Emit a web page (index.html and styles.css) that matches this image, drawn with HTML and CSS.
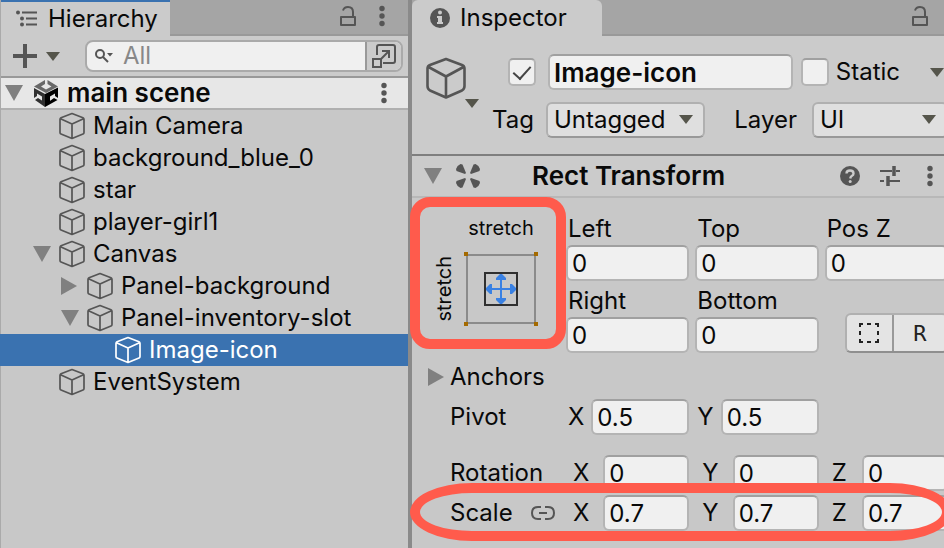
FILE: index.html
```html
<!DOCTYPE html>
<html lang="en">
<head>
<meta charset="utf-8">
<title>Editor</title>
<link rel="stylesheet" href="styles.css">
</head>
<body>
<svg class="defs" aria-hidden="true">
  <symbol id="cube" viewBox="0 0 28 28"><path d="M14 1.5 25 5.8Q26 6.3 26 7.5V20.5Q26 21.6 25 22L14 26.5 3 22Q2 21.6 2 20.5V7.5Q2 6.3 3 5.8ZM2.5 6.8 14 12 25.500 6.800M14 12V26.500" fill="none" stroke="currentColor" stroke-width="1.7" stroke-linejoin="round"/></symbol>
  <symbol id="down" viewBox="0 0 18 16"><path d="M0 0H18L9 16Z" fill="currentColor"/></symbol>
  <symbol id="right" viewBox="0 0 16 18"><path d="M0 0V18L16 9Z" fill="currentColor"/></symbol>
  <symbol id="caret" viewBox="0 0 14 9"><path d="M0 0H14L7 9Z" fill="currentColor"/></symbol>
  <symbol id="dots" viewBox="0 0 6 22"><circle cx="3" cy="3.500" r="2.700" fill="currentColor"/><circle cx="3" cy="11" r="2.700" fill="currentColor"/><circle cx="3" cy="18.500" r="2.700" fill="currentColor"/></symbol>
  <symbol id="lock" viewBox="0 0 16 20"><path d="M1 11H15V19H1ZM3 4.500Q4 1 8 1Q13 1 13 6V11" fill="none" stroke="currentColor" stroke-width="2" stroke-linejoin="round"/></symbol>
</svg>
<div class="editor">
  <section class="hierarchy">
    <header class="tabbar">
      <h2 class="tab">
        <svg class="icon-list" viewBox="0 0 22 18"><g fill="currentColor"><circle cx="2" cy="2.500" r="2"/><rect x="6" y="1.500" width="15" height="2"/><circle cx="6" cy="8.500" r="2"/><rect x="10" y="7.500" width="11" height="2"/><circle cx="6" cy="14.500" r="2"/><rect x="10" y="13.500" width="11" height="2"/></g></svg>
        Hierarchy
      </h2>
      <div class="tab-tools">
        <button aria-label="Lock"><svg class="icon-lock"><use href="#lock"/></svg></button>
        <button aria-label="Menu"><svg class="icon-dots"><use href="#dots"/></svg></button>
      </div>
    </header>
    <div class="toolbar">
      <button class="create" aria-label="Create">
        <svg class="icon-plus" viewBox="0 0 24 24"><path d="M0 12H24M12 0V24" stroke="currentColor" stroke-width="4"/></svg>
        <svg class="icon-caret"><use href="#caret"/></svg>
      </button>
      <div class="search">
        <svg class="icon-search" viewBox="0 0 18 14"><circle cx="5" cy="5" r="4" fill="none" stroke="currentColor" stroke-width="2"/><path d="M8 8 13 13" stroke="currentColor" stroke-width="2"/><path d="M12 4H18L15 7.500Z" fill="currentColor"/></svg>
        <input type="search" placeholder="All" aria-label="Search">
        <button class="search-open" aria-label="Open search window">
          <svg viewBox="0 0 26 26"><path d="M6 12V4Q6 2 8 2H22Q24 2 24 4V18Q24 20 22 20H12" fill="none" stroke="currentColor" stroke-width="2"/><path d="M2 16H10V24H2ZM10 16 18 8M11 8H18V15" fill="none" stroke="currentColor" stroke-width="2"/></svg>
        </button>
      </div>
    </div>
    <div class="scene">
      <svg class="fold"><use href="#down"/></svg>
      <svg class="icon-scene" viewBox="0 0 26 28">
        <path d="M1 7.500 12 1V5L8 7.500 13 10.500 18.500 7.500 14.500 5V1L25 7.500 13 14Z" fill="#686868"/>
        <path d="M1 9 12 15V24L9 22V17.500L4 14.500V17L1 19ZM2 21 5 19 12 23.500V28Z" fill="#303030"/>
        <path d="M12 15 25 8.500V19L22 17V14.500L17 17.500V22L14 24 21 19 24.500 21 12 28Z" fill="#000"/>
      </svg>
      <strong>main scene</strong>
      <button class="scene-menu" aria-label="Scene menu"><svg class="icon-dots"><use href="#dots"/></svg></button>
    </div>
    <ul class="tree">
      <li><div class="node"><span class="twist"></span><svg class="cube"><use href="#cube"/></svg>Main Camera</div></li>
      <li><div class="node"><span class="twist"></span><svg class="cube"><use href="#cube"/></svg>background_blue_0</div></li>
      <li><div class="node"><span class="twist"></span><svg class="cube"><use href="#cube"/></svg>star</div></li>
      <li><div class="node"><span class="twist"></span><svg class="cube"><use href="#cube"/></svg>player-girl1</div></li>
      <li><div class="node"><span class="twist"><svg class="fold"><use href="#down"/></svg></span><svg class="cube"><use href="#cube"/></svg>Canvas</div></li>
      <li><div class="node level-1"><span class="twist"><svg class="fold-closed"><use href="#right"/></svg></span><svg class="cube"><use href="#cube"/></svg>Panel-background</div></li>
      <li><div class="node level-1"><span class="twist"><svg class="fold"><use href="#down"/></svg></span><svg class="cube"><use href="#cube"/></svg>Panel-inventory-slot</div></li>
      <li><div class="node level-2 selected"><span class="twist"></span><svg class="cube"><use href="#cube"/></svg>Image-icon</div></li>
      <li><div class="node"><span class="twist"></span><svg class="cube"><use href="#cube"/></svg>EventSystem</div></li>
    </ul>
  </section>

  <section class="inspector">
    <header class="tabbar">
      <h2 class="tab">
        <svg class="icon-info" viewBox="0 0 20 20"><circle cx="10" cy="10" r="10" fill="currentColor"/><circle cx="10" cy="4.500" r="2" fill="#cbcbcb"/><path d="M7 8H12V14H13V16H7V14H8V10H7Z" fill="#cbcbcb"/></svg>
        Inspector
      </h2>
      <div class="tab-tools">
        <button aria-label="Lock"><svg class="icon-lock"><use href="#lock"/></svg></button>
      </div>
    </header>
    <div class="object">
      <button class="object-icon" aria-label="Object icon">
        <svg class="cube-large" viewBox="0 0 40 42"><path d="M20 2 36 8Q38.500 9 38.500 11.500V29Q38.500 32 36 33.500L20 40.500 4 33.500Q1.500 32 1.500 29V11.500Q1.500 9 4 8ZM2.500 10 20 19.500 37.500 10M20 19.500V40" fill="none" stroke="currentColor" stroke-width="2.600" stroke-linejoin="round"/></svg>
        <svg class="icon-caret"><use href="#caret"/></svg>
      </button>
      <div class="object-rows">
        <div class="object-name">
          <input type="checkbox" checked aria-label="Active">
          <input type="text" class="name" value="Image-icon" aria-label="Name">
          <label class="static"><input type="checkbox">Static</label>
          <svg class="icon-caret"><use href="#caret"/></svg>
        </div>
        <div class="object-tags">
          <label for="tag">Tag</label>
          <div class="select select-tag"><select id="tag"><option>Untagged</option></select><svg class="icon-caret"><use href="#caret"/></svg></div>
          <label for="layer">Layer</label>
          <div class="select select-layer"><select id="layer"><option>UI</option></select><svg class="icon-caret"><use href="#caret"/></svg></div>
        </div>
      </div>
    </div>
    <header class="component">
      <svg class="fold"><use href="#down"/></svg>
      <svg class="icon-rect" viewBox="0 0 26 26"><g fill="currentColor"><path d="M1 6Q2 2.500 5.500 1L7.500 1.500 11 10 10 11 1.500 8Z"/><path d="M25 6Q24 2.500 20.500 1L18.500 1.500 15 10 16 11 24.500 8Z"/><path d="M1 20Q2 23.500 5.500 25L7.500 24.500 11 16 10 15 1.500 18Z"/><path d="M25 20Q24 23.500 20.500 25L18.500 24.500 15 16 16 15 24.500 18Z"/></g></svg>
      <h3>Rect Transform</h3>
      <button aria-label="Help"><svg class="icon-help" viewBox="0 0 20 20"><circle cx="10" cy="10" r="10" fill="currentColor"/><path d="M6.500 7.500Q6.500 4.500 10 4.500T13.500 7.500Q13.500 9 12 9.800T10.200 12.500" fill="none" stroke="#cbcbcb" stroke-width="2.400"/><circle cx="10.200" cy="15.500" r="1.500" fill="#cbcbcb"/></svg></button>
      <button aria-label="Presets"><svg class="icon-preset" viewBox="0 0 20 20"><path d="M0 5H12M16 5H20M0 15H4M9 15H20" stroke="currentColor" stroke-width="2"/><path d="M14 0V10M8 10V20" stroke="currentColor" stroke-width="3.500"/></svg></button>
      <button aria-label="Component menu"><svg class="icon-dots"><use href="#dots"/></svg></button>
    </header>
    <div class="transform">
      <div class="rect">
        <button class="anchor" aria-label="Anchor presets">
          <span class="anchor-top">stretch</span>
          <span class="anchor-side">stretch</span>
          <svg class="anchor-map" viewBox="0 0 74 74">
            <path d="M3 3H71V71H3Z" fill="none" stroke="#8b8b8b" stroke-width="2"/>
            <path d="M0 0H4V4H0ZM70 0H74V4H70ZM0 70H4V74H0ZM70 70H74V74H70Z" fill="#a46a00"/>
            <path d="M21 21H53V53H21Z" fill="none" stroke="#303030" stroke-width="2"/>
            <path d="M36 24H38V36H50V38H38V50H36V38H24V36H36Z" fill="#3a81e3"/>
            <path d="M36 22H38L42 26V28H32V26ZM36 52H38L42 48V46H32V48ZM22 36V38L26 42H28V32H26ZM52 36V38L48 42H46V32H48Z" fill="#3a81e3"/>
          </svg>
        </button>
        <div class="rect-fields">
          <label>Left<input type="text" value="0"></label>
          <label>Top<input type="text" value="0"></label>
          <label>Pos Z<input type="text" value="0"></label>
          <label>Right<input type="text" value="0"></label>
          <label>Bottom<input type="text" value="0"></label>
          <div class="modes">
            <button class="blueprint" aria-label="Blueprint mode"><svg viewBox="0 0 20 20"><path d="M0 4V0H4V2H2V4ZM8 0H12V2H8ZM16 0H20V4H18V2H16ZM0 8H2V12H0ZM18 8H20V12H18ZM0 16H2V18H4V20H0ZM8 18H12V20H8ZM16 18H18V16H20V20H16Z" fill="#222"/></svg></button>
            <button class="raw">R</button>
          </div>
        </div>
        <div class="mark mark-anchor"></div>
      </div>
      <div class="row row-anchors"><svg class="fold-closed"><use href="#right"/></svg>Anchors</div>
      <div class="row row-pivot">
        <span class="title">Pivot</span>
        <label>X<input type="text" value="0.5"></label>
        <label>Y<input type="text" value="0.5"></label>
      </div>
      <div class="row">
        <span class="title">Rotation</span>
        <label>X<input type="text" value="0"></label>
        <label>Y<input type="text" value="0"></label>
        <label>Z<input type="text" value="0"></label>
      </div>
      <div class="row row-scale">
        <span class="title">Scale <svg class="icon-link" viewBox="0 0 24 14"><path d="M10 1H7Q1 1 1 7T7 13H10M14 1H17Q23 1 23 7T17 13H14M8 7H16" fill="none" stroke="currentColor" stroke-width="2"/></svg></span>
        <label>X<input type="text" value="0.7"></label>
        <label>Y<input type="text" value="0.7"></label>
        <label>Z<input type="text" value="0.7"></label>
        <div class="mark mark-scale"></div>
      </div>
    </div>
  </section>
</div>
</body>
</html>
```
FILE: styles.css
```css
* { box-sizing: border-box; }
html, body { height: 100%; margin: 0; overflow: hidden; }
body { font: 24px/32px Inter, "Liberation Sans", sans-serif; color: #090909; background: #c8c8c8; }
svg { display: block; flex: none; color: #555; }
h2, h3, ul { margin: 0; padding: 0; font-size: inherit; list-style: none; }
button { display: flex; align-items: center; padding: 0; border: 0; background: none; font: inherit; color: inherit; }
input, select { font: inherit; color: inherit; min-width: 0; margin: 0; }
.defs { position: absolute; width: 0; height: 0; }

.editor { display: flex; height: 100%; }
.hierarchy { flex: 407 1 0; min-width: 0; border-left: 1px solid #aaa; }
.inspector { flex: 532 1 0; min-width: 0; border-left: 4px solid #8a8a8a; }

.tabbar { display: flex; height: 36px; background: #a5a5a5; box-shadow: inset 0 -2px #999; }
.tab { display: flex; align-items: center; background: #cbcbcb; font-weight: 400; }
.hierarchy .tab { gap: 10px; padding: 0 12px 0 15px; border-top: 2px solid #3a72b0; }
.inspector .tab { gap: 10px; padding: 0 35px 0 18px; border-radius: 6px 6px 0 0; }
.tab-tools { display: flex; align-items: center; gap: 23px; margin-left: auto; padding: 0 23px 4px 0; }
.inspector .tab-tools { padding-right: 16px; }
.icon-list { width: 22px; height: 18px; }
.icon-lock { width: 16px; height: 20px; }
.icon-dots { width: 6px; height: 22px; }
.icon-info, .icon-help, .icon-preset { width: 20px; height: 20px; }
.icon-caret { width: 14px; height: 9px; color: #55554b; }
.fold { width: 18px; height: 16px; color: #808080; }
.fold-closed { width: 16px; height: 18px; color: #808080; }

.toolbar { display: flex; align-items: center; height: 42px; padding: 0 5px 0 12px; background: #cbcbcb; border-bottom: 2px solid #999; }
.create { gap: 9px; margin-right: 25px; }
.icon-plus { width: 24px; height: 24px; }
.search { display: flex; flex: 1; align-items: center; min-width: 0; height: 32px; padding-left: 8px; border: 2px solid #aaa; border-radius: 8px; background: #f0f0f0; overflow: hidden; }
.icon-search { width: 18px; height: 14px; }
.search input { flex: 1; padding: 0 10px; border: 0; background: none; }
.search input::placeholder { color: #888; opacity: 1; }
.search-open { height: 28px; padding: 0 4px; border-left: 2px solid #999; background: #cbcbcb; }
.search-open svg { width: 26px; height: 26px; }

.scene { display: flex; align-items: center; height: 32px; padding: 0 21px 0 4px; background: #e7e7e7; border-bottom: 2px solid #b0b0b0; }
.icon-scene { width: 26px; height: 28px; margin: 0 8px 0 10px; }
.scene strong, .component h3, .object-name .name { font-size: 26px; font-weight: 600; }
.scene-menu { margin-left: auto; }

.node { display: flex; align-items: center; height: 32px; padding-left: 32px; white-space: nowrap; }
.level-1 { padding-left: 60px; }
.level-2 { padding-left: 88px; }
.twist { width: 25px; }
.cube { width: 28px; height: 28px; margin-right: 7px; }
.selected { background: #3a72b0; color: #fff; margin-left: -1px; padding-left: 89px; }
.selected .cube { color: #fff; }

input[type="text"] { height: 36px; padding: 0 4px; border: 2px solid #b4b4b4; border-top-color: #a0a0a0; border-radius: 6px; background: #f0f0f0; }
input[type="checkbox"] { appearance: none; flex: none; display: grid; place-items: center; width: 28px; height: 28px; border: 2px solid #b4b4b4; border-top-color: #a0a0a0; border-radius: 5px; background: #f0f0f0; }
input[type="checkbox"]:checked::before { content: ""; width: 8px; height: 15px; margin-top: -4px; border: solid #444; border-width: 0 2px 2px 0; transform: rotate(42deg); }

.object { display: flex; height: 118px; padding: 18px 0 0 14px; background: #cbcbcb; }
.object-icon { flex-direction: column; align-items: flex-start; width: 53px; height: 54px; margin-top: 3px; }
.cube-large { width: 40px; height: 42px; }
.object-icon .icon-caret { margin-left: 39px; }
.object-rows { flex: 1; min-width: 0; }
.object-name { display: flex; align-items: center; padding-left: 29px; }
.object-name .name { flex: 1; margin: 0 8px 0 12px; }
.static { display: flex; align-items: center; gap: 7px; margin-right: 30px; }
.object-tags { display: flex; align-items: center; gap: 12px; margin: 12px -4px 0 13px; }
.select { position: relative; height: 36px; }
.select-tag { flex: 158 1 0; margin-right: 17px; }
.select-layer { flex: 135 1 0; margin-left: 3px; }
.select select { appearance: none; width: 100%; height: 36px; padding: 0 6px; border: 2px solid #b0b0b0; border-bottom-color: #999; border-radius: 6px; background: #dfdfdf; }
.select .icon-caret { position: absolute; right: 12px; top: 13px; pointer-events: none; }

.component { display: flex; align-items: center; height: 44px; padding: 0 11px 0 12px; background: #cbcbcb; border-top: 2px solid #7f7f7f; border-bottom: 2px solid #b8b8b8; }
.icon-rect { width: 26px; height: 26px; margin: 0 51px 0 13px; }
.component h3 { flex: 1; }
.component button { margin-left: 20px; }
.component button:last-child { margin-left: 27px; }

.transform { margin-right: -4px; padding-top: 15px; }
.rect { display: flex; position: relative; }
.anchor { display: grid; grid-template: 30px 92px / 52px 74px; flex: none; width: 154px; height: 122px; font-size: 20px; line-height: 28px; }
.anchor-top { grid-column: 2; }
.anchor-side { writing-mode: vertical-rl; transform: rotate(180deg); justify-self: end; padding-left: 6px; }
.anchor-map { width: 74px; height: 74px; }
.rect-fields { display: grid; grid-template-columns: repeat(3, minmax(0, 1fr)); gap: 4px 6px; flex: 1; }
.rect-fields label { display: flex; flex-direction: column; text-indent: 2px; }
.rect-fields input { text-indent: 0; }
.modes { display: flex; align-self: end; height: 40px; margin-left: 20px; border: 2px solid #b0b0b0; border-bottom-color: #8f8f8f; border-radius: 6px; background: #e4e4e4; }
.modes button { justify-content: center; flex: 53 1 0; }
.modes .blueprint { flex: 46 1 0; }
.modes button + button { border-left: 2px solid #999; }
.modes svg { width: 20px; height: 20px; }
.modes .raw { font: 22px "DejaVu Sans Mono", monospace; color: #222; }
.mark { position: absolute; border: 10px solid #ff5b4c; pointer-events: none; }
.mark-anchor { left: -2px; top: -16px; width: 156px; height: 152px; border-radius: 20px; }

.row { position: relative; display: grid; grid-template-columns: 148px repeat(3, minmax(0, 1fr)); column-gap: 6px; align-items: center; height: 40px; }
.row-anchors { display: flex; margin-top: 4px; padding-left: 16px; }
.title { display: flex; align-items: center; gap: 18px; padding-left: 38px; }
.row label { display: flex; align-items: center; justify-content: space-between; padding-left: 7px; }
.row input { width: 86px; }
.row-pivot { margin-bottom: 16px; }
.row-pivot label { padding-left: 2px; }
.row-pivot input { width: 98px; }
.icon-link { width: 24px; height: 14px; }
.mark-scale { left: -2px; right: -4px; top: -10px; height: 58px; border-radius: 62px / 29px; }
```
